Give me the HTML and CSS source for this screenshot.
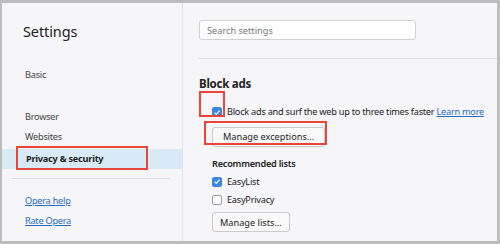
FILE: index.html
```html
<!DOCTYPE html>
<html lang="en">
<head>
<meta charset="utf-8">
<title>Settings</title>
<link rel="stylesheet" href="styles.css">
</head>
<body>
<div class="frame">
  <div class="window">
    <aside class="sidebar">
      <h1 class="title">Settings</h1>
      <nav class="nav">
        <a class="nav-item">Basic</a>
        <a class="nav-item nav-item--gap">Browser</a>
        <a class="nav-item">Websites</a>
        <a class="nav-item nav-item--active"><span class="annot annot--privacy"></span>Privacy &amp; security</a>
      </nav>
      <div class="side-sep"></div>
      <a class="side-link">Opera help</a>
      <a class="side-link">Rate Opera</a>
    </aside>
    <main class="content">
      <div class="search-row">
        <input class="search" type="text" placeholder="Search settings">
      </div>
      <section class="section">
        <h2 class="section-title">Block ads</h2>
        <div class="check-row check-row--main">
          <span class="annot annot--check"></span>
          <span class="cb cb--on"><svg viewBox="0 0 10 10" width="10" height="10"><path d="M2 5.2 L4.2 7.3 L8.2 2.6" fill="none" stroke="#fff" stroke-width="1.5"/></svg></span>
          <span class="check-label">Block ads and surf the web up to three times faster <a class="link">Learn more</a></span>
        </div>
        <div class="btn-row btn-row--exc">
          <span class="annot annot--exc"></span>
          <button class="btn btn--wide">Manage exceptions...</button>
        </div>
        <h3 class="sub-title">Recommended lists</h3>
        <div class="check-row">
          <span class="cb cb--on"><svg viewBox="0 0 10 10" width="10" height="10"><path d="M2 5.2 L4.2 7.3 L8.2 2.6" fill="none" stroke="#fff" stroke-width="1.5"/></svg></span>
          <span class="check-label">EasyList</span>
        </div>
        <div class="check-row">
          <span class="cb"></span>
          <span class="check-label">EasyPrivacy</span>
        </div>
        <div class="btn-row btn-row--lists">
          <button class="btn">Manage lists...</button>
        </div>
      </section>
    </main>
  </div>
</div>
</body>
</html>
```
FILE: styles.css
```css
* { box-sizing: border-box; }
html, body { margin: 0; padding: 0; }
body {
  width: 500px;
  height: 244px;
  overflow: hidden;
  font-family: "Noto Sans", "Open Sans", sans-serif;
  color: #2b2b2b;
  letter-spacing: -0.25px;
}
.frame {
  width: 500px;
  height: 244px;
  background: #bdbdbd;
  padding: 3px 3px 3px 2px;
}
.window {
  height: 100%;
  background: #f6f6f9;
  display: flex;
}
.sidebar {
  width: 181px;
  flex: none;
  border-right: 1px solid #e2e2e6;
  display: flex;
  flex-direction: column;
}
.title {
  margin: 18px 0 0 21px;
  font-size: 14.5px;
  font-weight: 400;
  line-height: 20px;
  color: #222;
  letter-spacing: -0.1px;
}
.nav {
  display: flex;
  flex-direction: column;
  margin-top: 24px;
}
.nav-item {
  font-size: 9.2px;
  line-height: 20px;
  padding-left: 23px;
  color: #444;
  position: relative;
}
.nav-item--gap { margin-top: 22px; }
.nav-item--active {
  background: #d8eaf6;
  font-weight: 700;
  color: #222;
  padding-left: 24px;
  margin-top: 2px;
}
.side-sep {
  height: 1px;
  background: #dcdce0;
  margin: 9px 12px 0 10px;
}
.side-link {
  font-size: 9.2px;
  line-height: 20px;
  padding-left: 23px;
  color: #2a6bbd;
  text-decoration: underline;
}
.side-link:first-of-type { margin-top: 12px; }
.content {
  flex: 1;
  padding: 17px 0 0 16px;
}
.search-row {
  padding-bottom: 18px;
  border-bottom: 1px solid #dcdce0;
}
.search {
  display: block;
  width: 217px;
  height: 20px;
  border: 1px solid #cfcfd4;
  border-radius: 3px;
  background: #fff;
  padding: 0 7px;
  font: inherit;
  font-size: 9.2px;
  color: #333;
}
.search::placeholder { color: #777; }
.section { padding-top: 17px; }
.section-title {
  margin: 0;
  font-size: 11.5px;
  font-weight: 700;
  line-height: 16px;
  color: #222;
}
.check-row {
  display: flex;
  align-items: center;
  gap: 5px;
  padding-left: 13px;
  height: 18px;
  position: relative;
}
.check-row--main { margin-top: 11px; }
.cb {
  width: 10px;
  height: 10px;
  flex: none;
  border: 1px solid #9a9a9a;
  border-radius: 2px;
  background: #fff;
  display: flex;
  align-items: center;
  justify-content: center;
}
.cb--on {
  background: #3a86e2;
  border-color: #3a86e2;
}
.cb svg { display: block; width: 9px; height: 9px; }
.check-label {
  font-size: 9.2px;
  line-height: 18px;
  color: #222;
  white-space: nowrap;
}
.link {
  color: #2a6bbd;
  text-decoration: underline;
}
.btn-row {
  padding-left: 13px;
  position: relative;
}
.btn-row--exc { margin-top: 2px; }
.btn-row--lists { margin-top: 0; }
.btn {
  font: inherit;
  font-size: 9.2px;
  height: 20px;
  padding: 0 7px;
  background: #f9f9fa;
  border: 1px solid #c9c9ce;
  border-radius: 3px;
  color: #222;
}
.btn--wide { padding: 0 10px; }
.sub-title {
  margin: 10px 0 2px 13px;
  font-size: 9.2px;
  font-weight: 600;
  line-height: 14px;
  color: #222;
}
.annot {
  position: absolute;
  border: 2px solid #e8453c;
  pointer-events: none;
}
.annot--privacy {
  left: 14px;
  top: -3px;
  width: 132px;
  height: 24px;
}
.annot--check {
  left: 0;
  top: -12px;
  width: 26px;
  height: 26px;
}
.annot--exc {
  left: 5px;
  top: -2px;
  width: 123px;
  height: 24px;
}
```
